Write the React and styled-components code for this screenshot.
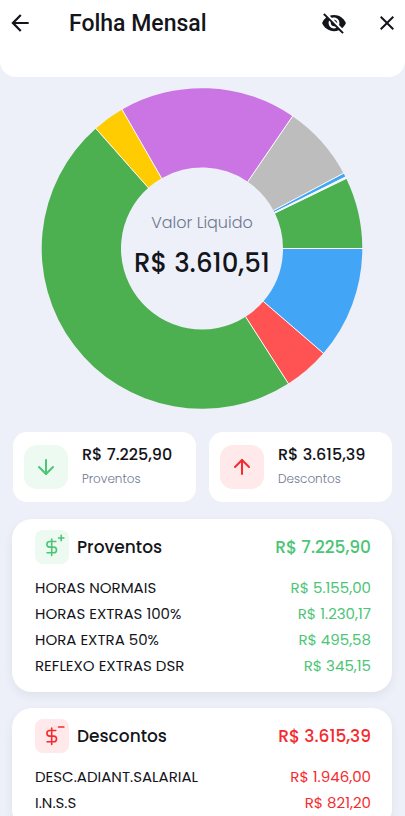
import React from "react";
import styled, { createGlobalStyle } from "styled-components";
import { MdArrowBack, MdClose, MdVisibilityOff } from "react-icons/md";
import { ArrowDown, ArrowUp } from "lucide-react";

const GREEN = "#4cc575";
const RED = "#f52b2f";

const GlobalStyle = createGlobalStyle`
  * {
    box-sizing: border-box;
  }
  body {
    margin: 0;
    background: #edf0f8;
    color: #14151b;
    font-family: Poppins, Inter, sans-serif;
  }
`;

const Screen = styled.div`
  height: 100vh;
  display: flex;
  flex-direction: column;
`;
const Header = styled.header`
  display: flex;
  align-items: flex-start;
  padding: 7px 3px 36px 5px;
  background: white;
  border-radius: 0 0 16px 16px;
`;
const IconButton = styled.button`
  display: flex;
  align-items: center;
  justify-content: center;
  width: 30px;
  height: 32px;
  padding: 0;
  border: none;
  background: none;
  color: #14151b;
  cursor: pointer;
`;
const Title = styled.h1`
  flex: 1;
  margin: 0 0 0 34px;
  font-family: Roboto, sans-serif;
  font-size: 23px;
  font-weight: 500;
  line-height: 34px;
`;
const Actions = styled.div`
  display: flex;
  gap: 23px;
`;
const Content = styled.main`
  flex: 1;
  min-height: 0;
  overflow-y: auto;
  scrollbar-width: none;
  padding: 11px 13px 16px 12px;
`;

const ChartBox = styled.div`
  display: grid;
  justify-items: center;
  align-items: center;
  > * {
    grid-area: 1 / 1;
  }
`;
const ChartSvg = styled.svg`
  display: block;
  width: 324px;
  max-width: 100%;
`;
const ChartLabel = styled.div`
  padding-bottom: 4px;
  text-align: center;
  p {
    margin: 0;
    font-size: 16px;
    font-weight: 300;
    line-height: 24px;
    color: #6f7890;
  }
  strong {
    display: block;
    margin-top: 8px;
    font-size: 26px;
    font-weight: 500;
    line-height: 40px;
  }
`;

const SummaryRow = styled.div`
  display: grid;
  grid-template-columns: 1fr 1fr;
  gap: 13px;
  margin: 23px 0 17px 1px;
`;
const SummaryCard = styled.div`
  display: flex;
  align-items: center;
  gap: 14px;
  height: 70px;
  padding: 0 11px;
  background: white;
  border-radius: 14px;
  strong {
    display: block;
    font-size: 16px;
    font-weight: 500;
    line-height: 24px;
    white-space: nowrap;
  }
  span {
    display: block;
    font-size: 12px;
    font-weight: 300;
    line-height: 24px;
    color: #6f7890;
  }
`;
const IconTile = styled.div`
  display: flex;
  flex-shrink: 0;
  align-items: center;
  justify-content: center;
  width: ${(props) => props.$size}px;
  height: ${(props) => props.$size}px;
  border-radius: ${(props) => (props.$size > 40 ? 13 : 8)}px;
  color: ${(props) => (props.$negative ? RED : GREEN)};
  background: ${(props) => (props.$negative ? "#ffe9ea" : "#ecfaf1")};
`;

const Section = styled.section`
  margin-bottom: 16px;
  padding: 11px 21px 13px 23px;
  background: white;
  border-radius: 20px;
  box-shadow: 0 4px 10px rgba(40, 50, 80, 0.07);
`;
const SectionHeader = styled.div`
  display: flex;
  align-items: center;
  gap: 8px;
  margin-bottom: 11px;
  h2,
  strong {
    margin: 0;
    font-size: 17px;
    font-weight: 500;
  }
  h2 {
    flex: 1;
  }
  strong {
    color: ${(props) => (props.$negative ? RED : GREEN)};
  }
`;
const EntryTable = styled.table`
  width: 100%;
  border-collapse: collapse;
  font-size: 15px;
  line-height: 26px;
  th,
  td {
    padding: 0;
    font-weight: 400;
    text-align: left;
  }
  td {
    text-align: right;
    color: ${(props) => (props.$negative ? RED : GREEN)};
  }
`;

// angles in degrees, clockwise from 3 o'clock
const slices = [
  { from: 0, to: 40.8, color: "#42a5f5" },
  { from: 40.8, to: 57.4, color: "#ff5252" },
  { from: 57.4, to: 228.5, color: "#4caf50" },
  { from: 228.5, to: 240.1, color: "#ffcc02" },
  { from: 240.1, to: 304.4, color: "#cb74e3" },
  { from: 304.4, to: 332, color: "#bdbdbd" },
  { from: 332, to: 333.5, color: "#42a5f5" },
  { from: 333.5, to: 334.1, color: "#e4f6fb" },
  { from: 334.1, to: 360, color: "#4caf50" },
];

const point = (radius, angle) => {
  const rad = (angle * Math.PI) / 180;
  return `${radius * Math.cos(rad)} ${radius * Math.sin(rad)}`;
};

const slicePath = ({ from, to }, outer = 160.3, inner = 81) => {
  const large = to - from > 180 ? 1 : 0;
  return `M${point(outer, from)} A${outer} ${outer} 0 ${large} 1 ${point(outer, to)} L${point(inner, to)} A${inner} ${inner} 0 ${large} 0 ${point(inner, from)} Z`;
};

function DonutChart() {
  return (
    <ChartSvg viewBox="-162 -160.5 324 321" aria-hidden="true">
      {slices.map((slice) => (
        <path key={slice.from} d={slicePath(slice)} fill={slice.color} />
      ))}
      {slices.map((slice) => (
        <path
          key={slice.from}
          d={`M${point(81, slice.from)} L${point(161, slice.from)}`}
          stroke="white"
          strokeWidth="1"
        />
      ))}
    </ChartSvg>
  );
}

function DollarIcon({ negative }) {
  return (
    <svg
      width="34"
      height="34"
      viewBox="0 0 34 34"
      fill="none"
      stroke="currentColor"
      strokeWidth="1.6"
      strokeLinecap="round"
      strokeLinejoin="round"
      aria-hidden="true"
    >
      <path d="M16.7 9v16.5M20.8 11.5h-6.1a2.8 2.8 0 0 0 0 5.6h4a2.8 2.8 0 0 1 0 5.6H12.1" />
      <path d={negative ? "M23.5 8h5.4" : "M23.5 8h5.4M26.2 5.3v5.4"} />
    </svg>
  );
}

function EntrySection({ title, total, entries, negative }) {
  return (
    <Section>
      <SectionHeader $negative={negative}>
        <IconTile $size={34} $negative={negative}>
          <DollarIcon negative={negative} />
        </IconTile>
        <h2>{title}</h2>
        <strong>{total}</strong>
      </SectionHeader>
      <EntryTable $negative={negative} aria-label={title}>
        <tbody>
          {entries.map(([name, value]) => (
            <tr key={name}>
              <th scope="row">{name}</th>
              <td>{value}</td>
            </tr>
          ))}
        </tbody>
      </EntryTable>
    </Section>
  );
}

const proventos = [
  ["HORAS NORMAIS", "R$ 5.155,00"],
  ["HORAS EXTRAS 100%", "R$ 1.230,17"],
  ["HORA EXTRA 50%", "R$ 495,58"],
  ["REFLEXO EXTRAS DSR", "R$ 345,15"],
];

const descontos = [
  ["DESC.ADIANT.SALARIAL", "R$ 1.946,00"],
  ["I.N.S.S", "R$ 821,20"],
];

function App() {
  return (
    <Screen>
      <GlobalStyle />
      <Header>
        <IconButton aria-label="Voltar">
          <MdArrowBack size={26} />
        </IconButton>
        <Title>Folha Mensal</Title>
        <Actions>
          <IconButton aria-label="Ocultar valores">
            <MdVisibilityOff size={26} />
          </IconButton>
          <IconButton aria-label="Fechar">
            <MdClose size={24} />
          </IconButton>
        </Actions>
      </Header>
      <Content>
        <ChartBox>
          <DonutChart />
          <ChartLabel>
            <p>Valor Liquido</p>
            <strong>R$ 3.610,51</strong>
          </ChartLabel>
        </ChartBox>
        <SummaryRow>
          <SummaryCard>
            <IconTile $size={44}>
              <ArrowDown size={24} />
            </IconTile>
            <div>
              <strong>R$ 7.225,90</strong>
              <span>Proventos</span>
            </div>
          </SummaryCard>
          <SummaryCard>
            <IconTile $size={44} $negative>
              <ArrowUp size={24} />
            </IconTile>
            <div>
              <strong>R$ 3.615,39</strong>
              <span>Descontos</span>
            </div>
          </SummaryCard>
        </SummaryRow>
        <EntrySection title="Proventos" total="R$ 7.225,90" entries={proventos} />
        <EntrySection title="Descontos" total="R$ 3.615,39" entries={descontos} negative />
      </Content>
    </Screen>
  );
}

export default App;
